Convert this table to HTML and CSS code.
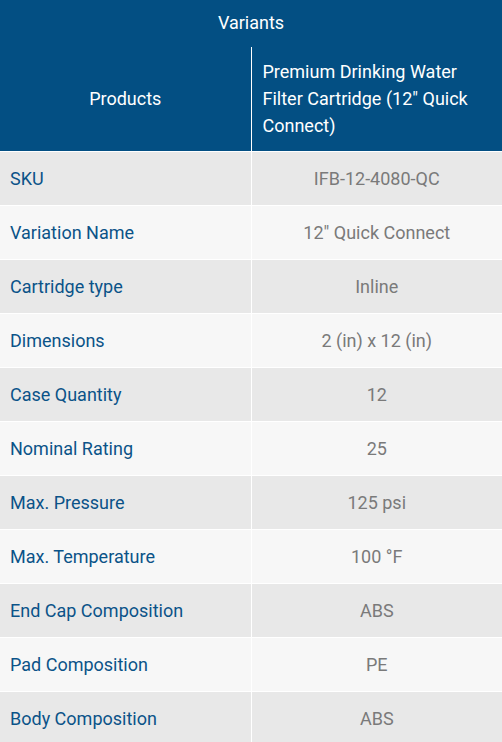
FILE: index.html
```html
<!DOCTYPE html>
<html lang="en">
<head>
    <meta charset="UTF-8">
    <meta name="viewport" content="width=device-width, initial-scale=1.0">
    <title>Variants</title>
    <link rel="stylesheet" href="styles.css">
</head>
<body>
    <table class="variants">
        <thead>
            <tr>
                <th colspan="2" class="title">Variants</th>
            </tr>
            <tr>
                <th class="col-label">Products</th>
                <th class="col-product">Premium Drinking Water Filter Cartridge (12" Quick Connect)</th>
            </tr>
        </thead>
        <tbody>
            <tr><td class="label">SKU</td><td class="value">IFB-12-4080-QC</td></tr>
            <tr><td class="label">Variation Name</td><td class="value">12" Quick Connect</td></tr>
            <tr><td class="label">Cartridge type</td><td class="value">Inline</td></tr>
            <tr><td class="label">Dimensions</td><td class="value">2 (in) x 12 (in)</td></tr>
            <tr><td class="label">Case Quantity</td><td class="value">12</td></tr>
            <tr><td class="label">Nominal Rating</td><td class="value">25</td></tr>
            <tr><td class="label">Max. Pressure</td><td class="value">125 psi</td></tr>
            <tr><td class="label">Max. Temperature</td><td class="value">100 °F</td></tr>
            <tr><td class="label">End Cap Composition</td><td class="value">ABS</td></tr>
            <tr><td class="label">Pad Composition</td><td class="value">PE</td></tr>
            <tr><td class="label">Body Composition</td><td class="value">ABS</td></tr>
        </tbody>
    </table>
</body>
</html>
```

FILE: styles.css
```css
body {
    margin: 0;
    background-color: #ffffff;
    font-family: Roboto, "Liberation Sans", sans-serif;
    font-size: 18px;
    line-height: 27px;
}
.variants {
    width: 100%;
    border-collapse: collapse;
    table-layout: fixed;
}
.variants th {
    background-color: #034f83;
    color: #ffffff;
    font-weight: normal;
}
.title {
    height: 45px;
    padding: 0 10px 2px;
    text-align: center;
}
.col-label,
.col-product {
    width: 50%;
    height: 102px;
    padding: 0 10px 2px;
    border-bottom: 1px solid #ffffff;
}
.col-label {
    text-align: center;
    border-right: 1px solid #ffffff;
}
.col-product {
    text-align: left;
    padding-left: 11px;
    padding-right: 14px;
}
.variants td {
    height: 52px;
    padding: 0 10px 1px;
    border: 1px solid #ffffff;
    border-left: none;
}
.variants td:last-child {
    border-right: none;
}
.variants tbody tr:nth-child(odd) td {
    background-color: #e8e8e8;
}
.variants tbody tr:nth-child(even) td {
    background-color: #f7f7f7;
}
.label {
    color: #0b5388;
}
.value {
    color: #7a7a7a;
    text-align: center;
}
```
